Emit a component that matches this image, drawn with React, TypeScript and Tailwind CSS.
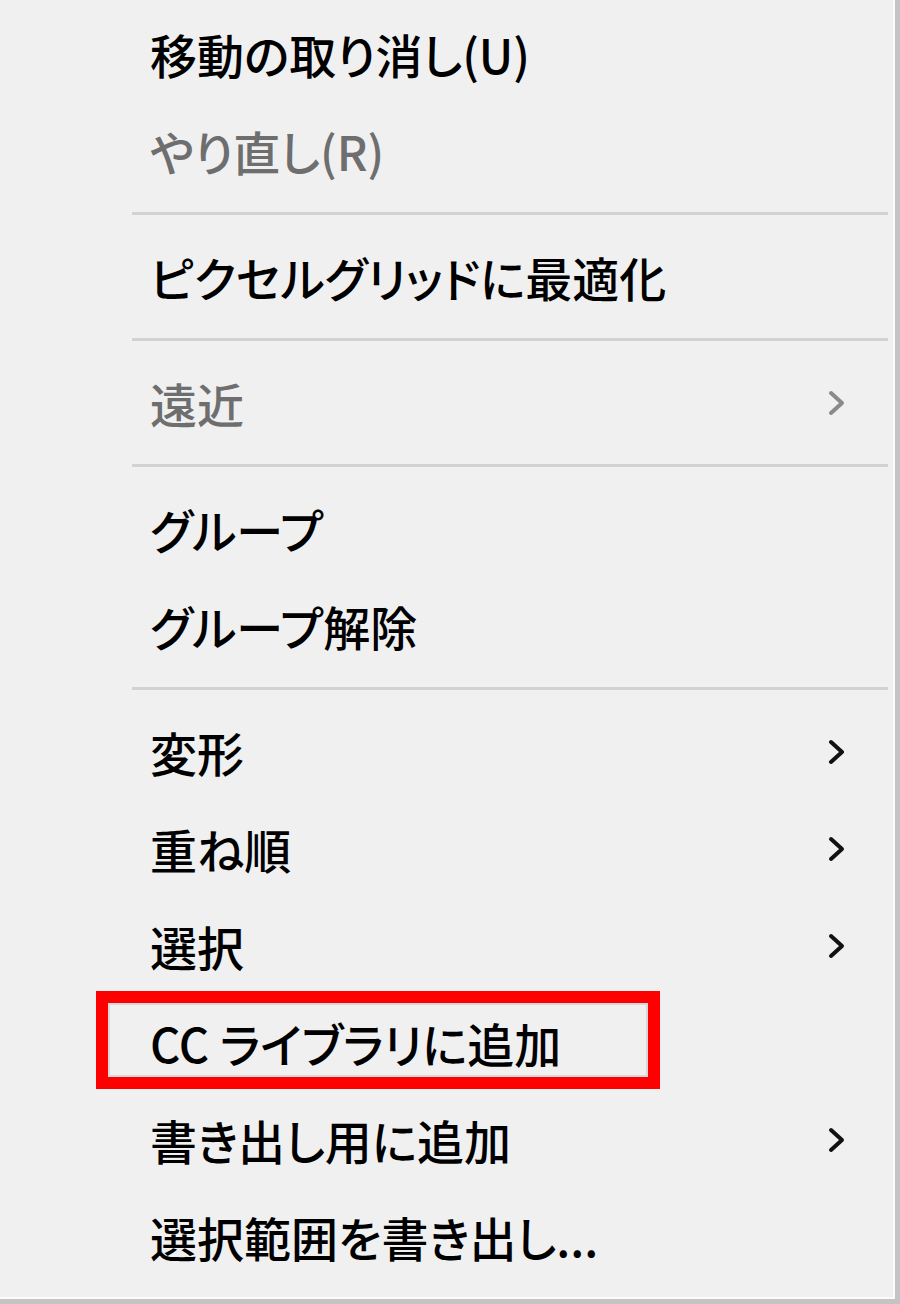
import React from "react";

type Item = {
  label?: string;
  disabled?: boolean;
  sub?: boolean;
  sep?: boolean;
  mark?: boolean;
};

const items: Item[] = [
  { label: "移動の取り消し(U)" },
  { label: "やり直し(R)", disabled: true },
  { sep: true },
  { label: "ピクセルグリッドに最適化" },
  { sep: true },
  { label: "遠近", disabled: true, sub: true },
  { sep: true },
  { label: "グループ" },
  { label: "グループ解除" },
  { sep: true },
  { label: "変形", sub: true },
  { label: "重ね順", sub: true },
  { label: "選択", sub: true },
  { label: "CC ライブラリに追加", mark: true },
  { label: "書き出し用に追加", sub: true },
  { label: "選択範囲を書き出し..." },
];

function Chevron({ gray }: { gray?: boolean }) {
  return (
    <svg width="24" height="30" viewBox="0 0 24 30" fill="none">
      <path
        d="M6 5 L17 15 L6 25"
        stroke={gray ? "#8a8a8a" : "#111"}
        strokeWidth="4"
        strokeLinecap="round"
        strokeLinejoin="round"
      />
    </svg>
  );
}

export default function App() {
  return (
    <div className="w-[900px] h-[1304px] bg-[#f0f0f0] border-r-[5px] border-b-[5px] border-[#c4c4c4]">
      <div className="h-full border-r-2 border-b-2 border-[#fbfbfb] pt-[5px] font-['Noto_Sans_CJK_JP','Noto_Sans',sans-serif] [font-feature-settings:'palt']">
        {items.map((it, i) =>
          it.sep ? (
            <div key={i} className="h-[29px] flex items-center pl-[132px] pr-[5px]">
              <div className="h-[3px] w-full bg-[#d2d2d2]" />
            </div>
          ) : (
            <div key={i} className="relative h-[97px] flex items-center justify-between pl-[150px] pr-[44px]">
              <span
                className={`text-[47px] leading-none font-medium ${
                  it.disabled ? "text-[#6e6e6e]" : "text-black"
                }`}
              >
                {it.label}
              </span>
              {it.sub ? <Chevron gray={it.disabled} /> : null}
              {it.mark ? (
                <div className="absolute left-[96px] top-[-3px] w-[564px] h-[98px] border-[12px] border-[#ff0000]">
                  <div className="w-full h-full border-2 border-[#d8d8d8]" />
                </div>
              ) : null}
            </div>
          )
        )}
      </div>
    </div>
  );
}
